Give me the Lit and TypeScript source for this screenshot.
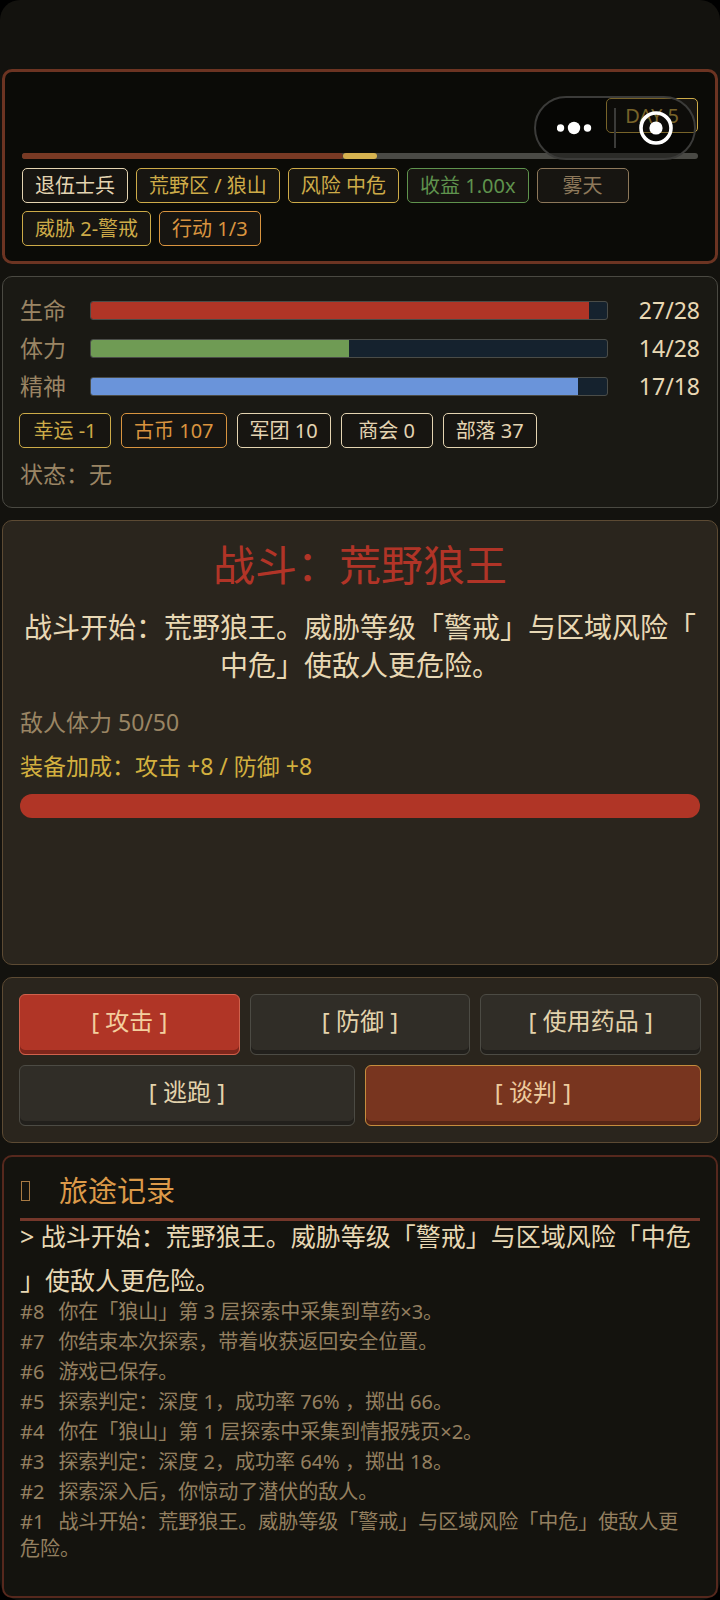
import { LitElement, html, css } from "lit";
import { customElement, state } from "lit/decorators.js";
import { classMap } from "lit/directives/class-map.js";
import { styleMap } from "lit/directives/style-map.js";

type Tone = "plain" | "gold" | "green" | "mute" | "orange";
interface Chip { text: string; tone: Tone; }
interface Meter { id: string; label: string; now: number; max: number; }

const PLACE: Chip[] = [
  { text: "退伍士兵", tone: "plain" },
  { text: "荒野区 / 狼山", tone: "gold" },
  { text: "风险 中危", tone: "gold" },
  { text: "收益 1.00x", tone: "green" },
  { text: "雾天", tone: "mute" },
  { text: "威胁 2-警戒", tone: "gold" },
  { text: "行动 1/3", tone: "orange" },
];

const METERS: Meter[] = [
  { id: "hp", label: "生命", now: 27, max: 28 },
  { id: "sp", label: "体力", now: 14, max: 28 },
  { id: "mp", label: "精神", now: 17, max: 18 },
];

const STANDING: Chip[] = [
  { text: "幸运 -1", tone: "gold" },
  { text: "古币 107", tone: "orange" },
  { text: "军团 10", tone: "plain" },
  { text: "商会 0", tone: "plain" },
  { text: "部落 37", tone: "plain" },
];

const LOG: [number, string][] = [
  [8, "你在「狼山」第 3 层探索中采集到草药×3。"],
  [7, "你结束本次探索，带着收获返回安全位置。"],
  [6, "游戏已保存。"],
  [5, "探索判定：深度 1，成功率 76% ，掷出 66。"],
  [4, "你在「狼山」第 1 层探索中采集到情报残页×2。"],
  [3, "探索判定：深度 2，成功率 64% ，掷出 18。"],
  [2, "探索深入后，你惊动了潜伏的敌人。"],
  [1, "战斗开始：荒野狼王。威胁等级「警戒」与区域风险「中危」使敌人更危险。"],
];

const STORY = "战斗开始：荒野狼王。威胁等级「警戒」与区域风险「中危」使敌人更危险。";

@customElement("status-chip")
export class StatusChip extends LitElement {
  static properties = { tone: { type: String, reflect: true } };
  declare tone: Tone;

  static styles = css`
    :host {
      display: inline-flex;
      align-items: center;
      justify-content: center;
      box-sizing: border-box;
      min-width: 92px;
      height: 35px;
      padding: 0 12px;
      border: 1px solid currentColor;
      border-radius: 5px;
      background: #171511;
      color: #e4d4b1;
      font-size: 20px;
      line-height: 24px;
      white-space: nowrap;
    }
    :host([tone="gold"]) { color: #cdab48; }
    :host([tone="green"]) { color: #5f934d; }
    :host([tone="mute"]) { color: #8d785a; }
    :host([tone="orange"]) { color: #d9943f; }
  `;

  render() {
    return html`<slot></slot>`;
  }
}

@customElement("app-root")
export class AppRoot extends LitElement {
  @state() private enemyNow = 50;
  private enemyMax = 50;

  static styles = css`
    :host {
      display: block;
      background: #000;
      color: #e8d8b4;
      font-family: "Noto Sans", "Noto Sans CJK SC", sans-serif;
      font-size: 23px;
      line-height: 36px;
    }
    * { box-sizing: border-box; }
    h1, h2, p, ol { margin: 0; padding: 0; font-weight: 400; }
    .app {
      position: relative;
      display: flex;
      flex-direction: column;
      gap: 12px;
      min-height: 100vh;
      padding: 69px 2px 2px;
      border-radius: 20px;
      background: #13120e;
    }
    .card {
      padding: 16px;
      border: 1px solid #5c4a33;
      border-radius: 10px;
      background: #2a251d;
    }
    .header {
      padding: 26px 17px 15px;
      border: 3px solid #6c3422;
      background: #0b0b07;
    }
    .day { display: flex; justify-content: flex-end; }
    .track {
      display: flex;
      height: 6px;
      margin: 20px 0 9px;
      border-radius: 3px;
      background: #4a4a45;
    }
    .track span { border-radius: 3px; }
    .done { background: #793a24; }
    .here { background: #d6b350; }
    .chips { display: flex; flex-wrap: wrap; gap: 8px; }
    .chips.wide { gap: 10px; margin-top: 8px; }

    .capsule {
      position: absolute;
      top: 96px;
      right: 24px;
      display: flex;
      align-items: center;
      width: 162px;
      height: 64px;
      border: 2px solid #3b3b39;
      border-radius: 32px;
      background: rgba(0, 0, 0, 0.42);
    }
    .capsule button {
      flex: 1;
      display: grid;
      place-items: center;
      padding: 0;
      border: 0;
      background: none;
    }
    .capsule .sep { width: 2px; height: 40px; background: #3b3b39; }

    .stats { padding: 14px 16px 15px; border-color: #4a4942; background: #1a1914; }
    .meter {
      display: grid;
      grid-template-columns: 70px 1fr 92px;
      align-items: center;
      height: 38px;
      padding: 0 1px;
    }
    .meter .name, .status, .enemy { color: #9a8564; }
    .meter .value { text-align: right; }
    .bar {
      height: 19px;
      border: 1px solid #4a4c48;
      border-radius: 3px;
      overflow: hidden;
      background: #15222e;
    }
    .bar .fill { height: 100%; }
    .hp { background: #b03526; }
    .sp { background: #6f9b54; }
    .mp { background: #6a94da; }
    .status { margin-top: 8px; padding: 0 1px; }

    .scene { flex: 1 0 auto; min-height: 340px; padding: 16px 17px; }
    .scene h1 {
      color: #b13427;
      font-size: 42px;
      line-height: 56px;
      text-align: center;
    }
    .story {
      margin: 15px 0 20px;
      font-size: 28px;
      line-height: 38px;
      text-align: center;
      line-break: anywhere;
    }
    .gear { margin: 8px 0 10px; color: #d3b03f; }
    .foe { height: 24px; border-radius: 12px; overflow: hidden; background: #15222e; }
    .foe .fill { height: 100%; }

    .actions { display: grid; grid-template-columns: repeat(6, 1fr); gap: 10px; }
    .act {
      grid-column: span 2;
      height: 61px;
      padding: 0 0 8px;
      border: 1px solid #4c4b44;
      border-radius: 6px;
      background: #302d27;
      box-shadow: inset 0 -4px 0 rgba(0, 0, 0, 0.28);
      color: #e3d3ac;
      font: inherit;
      font-size: 24px;
    }
    .act.half { grid-column: span 3; }
    .act.attack { border-color: #d0614c; background: #b03526; color: #f3cf9e; }
    .act.talk { border-color: #c58d3d; background: #78351f; color: #eecb9d; }

    .log { padding: 16px 16px 34px; border: 2px solid #56281d; background: #14130e; }
    .log h2 {
      display: flex;
      align-items: center;
      gap: 29px;
      padding: 0 0 9px 1px;
      border-bottom: 3px solid #75372a;
      color: #dc9a49;
      font-size: 29px;
      line-height: 36px;
    }
    .glyph { width: 9px; height: 20px; border: 1px solid #a87a43; }
    .latest {
      margin: -7px 0 -4px;
      font-size: 25px;
      line-height: 44px;
      line-break: anywhere;
    }
    .entries {
      display: flex;
      flex-direction: column;
      gap: 3px;
      padding-right: 4px;
      list-style: none;
      color: #948060;
      font-size: 20px;
      line-height: 27px;
    }
    .entries li { line-break: anywhere; }
    .entries .no { margin-right: 14px; }
  `;

  private chips(list: Chip[]) {
    return list.map((c) => html`<status-chip tone=${c.tone}>${c.text}</status-chip>`);
  }

  private fill(kind: string, now: number, max: number) {
    return html`<div
      class=${classMap({ fill: true, [kind]: true })}
      style=${styleMap({ width: `${(now / max) * 100}%` })}
    ></div>`;
  }

  private meter(m: Meter) {
    return html`<div class="meter">
      <span class="name" id=${m.id}>${m.label}</span>
      <div class="bar" role="progressbar" aria-labelledby=${m.id}
        aria-valuenow=${m.now} aria-valuemax=${m.max}>
        ${this.fill(m.id, m.now, m.max)}
      </div>
      <span class="value">${m.now}/${m.max}</span>
    </div>`;
  }

  render() {
    return html`
      <main class="app">
        <header class="card header">
          <div class="day"><status-chip tone="gold">DAY 5</status-chip></div>
          <div class="track">
            <span class="done" style=${styleMap({ width: "47.5%" })}></span>
            <span class="here" style=${styleMap({ width: "5%" })}></span>
          </div>
          <div class="chips">${this.chips(PLACE)}</div>
        </header>

        <section class="card stats">
          ${METERS.map((m) => this.meter(m))}
          <div class="chips wide">${this.chips(STANDING)}</div>
          <p class="status">状态：无</p>
        </section>

        <section class="card scene">
          <h1>战斗：荒野狼王</h1>
          <p class="story">${STORY}</p>
          <p class="enemy" id="enemy">敌人体力 ${this.enemyNow}/${this.enemyMax}</p>
          <p class="gear">装备加成：攻击 +8 / 防御 +8</p>
          <div class="foe" role="progressbar" aria-labelledby="enemy"
            aria-valuenow=${this.enemyNow} aria-valuemax=${this.enemyMax}>
            ${this.fill("hp", this.enemyNow, this.enemyMax)}
          </div>
        </section>

        <section class="card actions">
          <button class="act attack">[ 攻击 ]</button>
          <button class="act">[ 防御 ]</button>
          <button class="act">[ 使用药品 ]</button>
          <button class="act half">[ 逃跑 ]</button>
          <button class="act half talk">[ 谈判 ]</button>
        </section>

        <section class="card log">
          <h2><span class="glyph" aria-hidden="true"></span>旅途记录</h2>
          <p class="latest">&gt; ${STORY}</p>
          <ol class="entries">
            ${LOG.map(([n, text]) => html`<li><span class="no">#${n}</span>${text}</li>`)}
          </ol>
        </section>

        <nav class="capsule">
          <button aria-label="更多">
            <svg width="36" height="14" viewBox="0 0 36 14" fill="#fff">
              <circle cx="3.5" cy="7" r="3.7" />
              <circle cx="17" cy="7" r="6.2" />
              <circle cx="30.5" cy="7" r="3.7" />
            </svg>
          </button>
          <span class="sep"></span>
          <button aria-label="关闭">
            <svg width="36" height="36" viewBox="0 0 36 36">
              <circle cx="19" cy="18" r="15" fill="none" stroke="#fff" stroke-width="3.6" />
              <circle cx="19" cy="18" r="6.6" fill="#fff" />
            </svg>
          </button>
        </nav>
      </main>
    `;
  }
}
